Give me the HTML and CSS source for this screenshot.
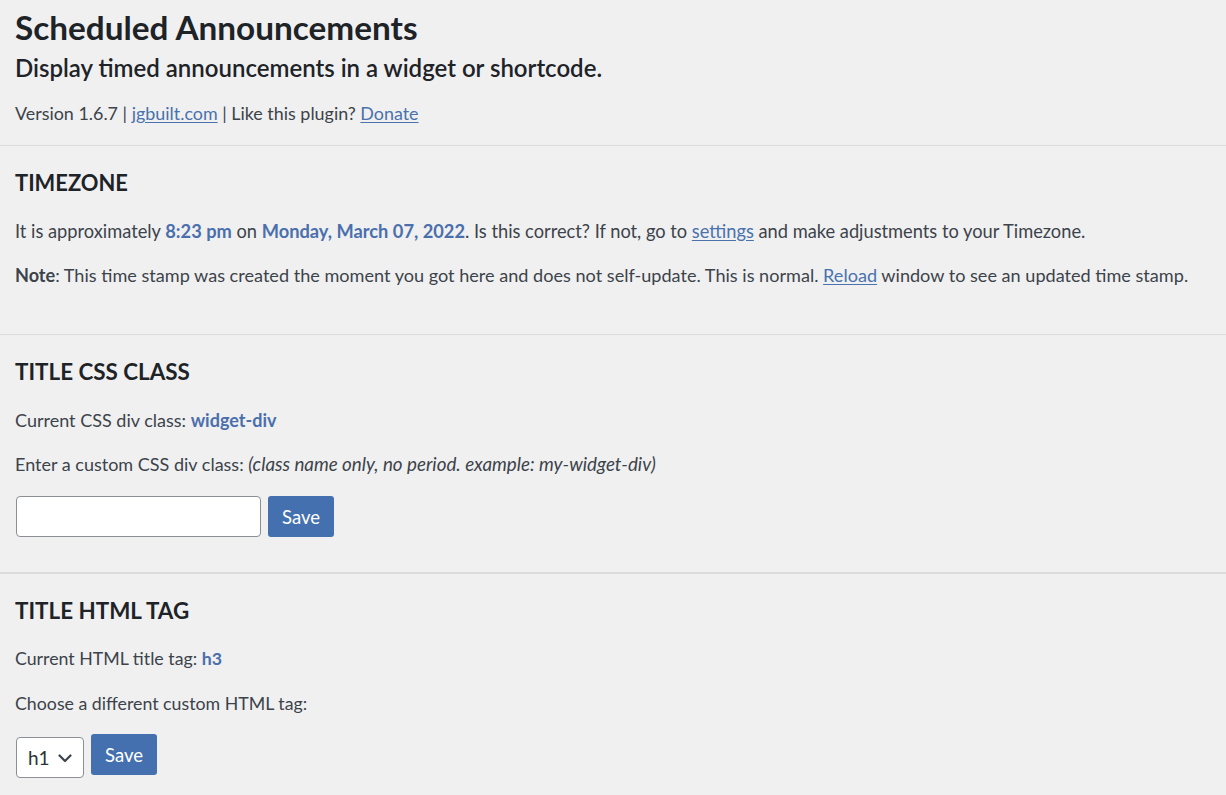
FILE: index.html
```html
<!DOCTYPE html>
<html lang="en">
<head>
<meta charset="utf-8">
<title>Scheduled Announcements</title>
<link rel="stylesheet" href="styles.css">
</head>
<body>
<div class="page">
  <header class="intro">
    <h1 class="title">Scheduled Announcements</h1>
    <p class="subtitle">Display timed announcements in a widget or shortcode.</p>
    <p class="meta">Version 1.6.7 | <a href="#" class="link">jgbuilt.com</a> | Like this plugin? <a href="#" class="link">Donate</a></p>
  </header>

  <section class="block block-time">
    <h2 class="heading heading-time">TIMEZONE</h2>
    <p class="text">It is approximately <strong class="hl">8:23 pm</strong> on <strong class="hl">Monday, March 07, 2022</strong>. Is this correct? If not, go to <a href="#" class="link">settings</a> and make adjustments to your Timezone.</p>
    <p class="text text-note gap-sm"><strong class="note">Note</strong>: This time stamp was created the moment you got here and does not self-update. This is normal. <a href="#" class="link">Reload</a> window to see an updated time stamp.</p>
  </section>

  <section class="block block-css">
    <h2 class="heading">TITLE CSS CLASS</h2>
    <p class="text">Current CSS div class: <strong class="hl">widget-div</strong></p>
    <p class="text gap-sm">Enter a custom CSS div class: <em class="hint">(class name only, no period. example: my-widget-div)</em></p>
    <form class="row row-css">
      <input type="text" class="field">
      <button type="button" class="btn">Save</button>
    </form>
  </section>

  <section class="block block-tag">
    <h2 class="heading">TITLE HTML TAG</h2>
    <p class="text gap-md">Current HTML title tag: <strong class="hl">h3</strong></p>
    <p class="text gap-md">Choose a different custom HTML tag:</p>
    <form class="row row-tag">
      <div class="select">
        <span class="select-value">h1</span>
        <svg class="chev" width="14" height="9" viewBox="0 0 14 9"><path d="M1.5 1.5 L7 7 L12.5 1.5" fill="none" stroke="#3c434a" stroke-width="2.2" stroke-linecap="round" stroke-linejoin="round"/></svg>
      </div>
      <button type="button" class="btn">Save</button>
    </form>
  </section>
</div>
</body>
</html>
```

FILE: styles.css
```css
html, body {
  margin: 0;
  padding: 0;
  background: #f0f0f1;
}
body {
  font-family: Lato, "Noto Sans", sans-serif;
  color: #3c434a;
  font-size: 18px;
}
.page {
  width: 1226px;
  min-height: 795px;
}
.intro {
  padding: 7px 15px 20px;
  border-bottom: 1px solid #dcdcde;
}
.title {
  margin: 0;
  font-size: 33.3px;
  line-height: 40px;
  font-weight: 700;
  color: #1d2327;
}
.subtitle {
  margin: 7px 0 0;
  font-size: 24px;
  line-height: 28px;
  font-weight: 600;
  color: #1d2327;
}
.meta {
  margin: 19px 0 0;
  font-size: 17.9px;
  line-height: 24px;
}
.link {
  color: #4a72ad;
  text-decoration: underline;
  text-underline-offset: 2px;
}
.block {
  padding: 23px 15px 0;
}
.block-time {
  padding-bottom: 47px;
  border-bottom: 1px solid #dcdcde;
}
.block-time .text { font-size: 18.25px; }
.block-time .text-note { font-size: 18.1px; }
.block-css {
  padding-bottom: 35px;
  border-bottom: 2px solid #dcdcde;
}
.heading {
  margin: 0;
  font-size: 22.4px;
  line-height: 28px;
  font-weight: 700;
  color: #1d2327;
}
.heading-time { font-size: 21.9px; }
.text {
  margin: 22px 0 0;
  font-size: 18px;
  line-height: 24px;
}
.block-tag .text { font-size: 17.75px; }
.gap-sm { margin-top: 20px; }
.gap-md { margin-top: 21px; }
.hl {
  color: #4a6fac;
  font-weight: 700;
}
.note {
  font-weight: 700;
  color: #3c434a;
}
.hint {
  font-style: italic;
  font-size: 18.8px;
}
.row {
  display: flex;
  gap: 7px;
  margin: 20px 0 0;
  align-items: flex-start;
}
.row-tag { margin-top: 19px; }
.field {
  box-sizing: border-box;
  width: 245px;
  height: 41px;
  margin: 0 0 0 1px;
  border: 1px solid #8c8f94;
  border-radius: 4px;
  background: #fff;
}
.btn {
  box-sizing: border-box;
  width: 66px;
  height: 41px;
  border: 0;
  border-radius: 3px;
  background: #4470b0;
  color: #fff;
  font-family: Lato, "Noto Sans", sans-serif;
  font-size: 18.5px;
  padding: 0;
}
.select {
  box-sizing: border-box;
  width: 68px;
  height: 41px;
  margin: 3px 0 0 1px;
  border: 1px solid #8c8f94;
  border-radius: 4px;
  background: #fff;
  display: flex;
  align-items: center;
  padding: 0 11px 0 11px;
  gap: 8px;
  font-size: 19px;
  color: #2c3338;
}
.chev { margin-top: 1px; }
```
